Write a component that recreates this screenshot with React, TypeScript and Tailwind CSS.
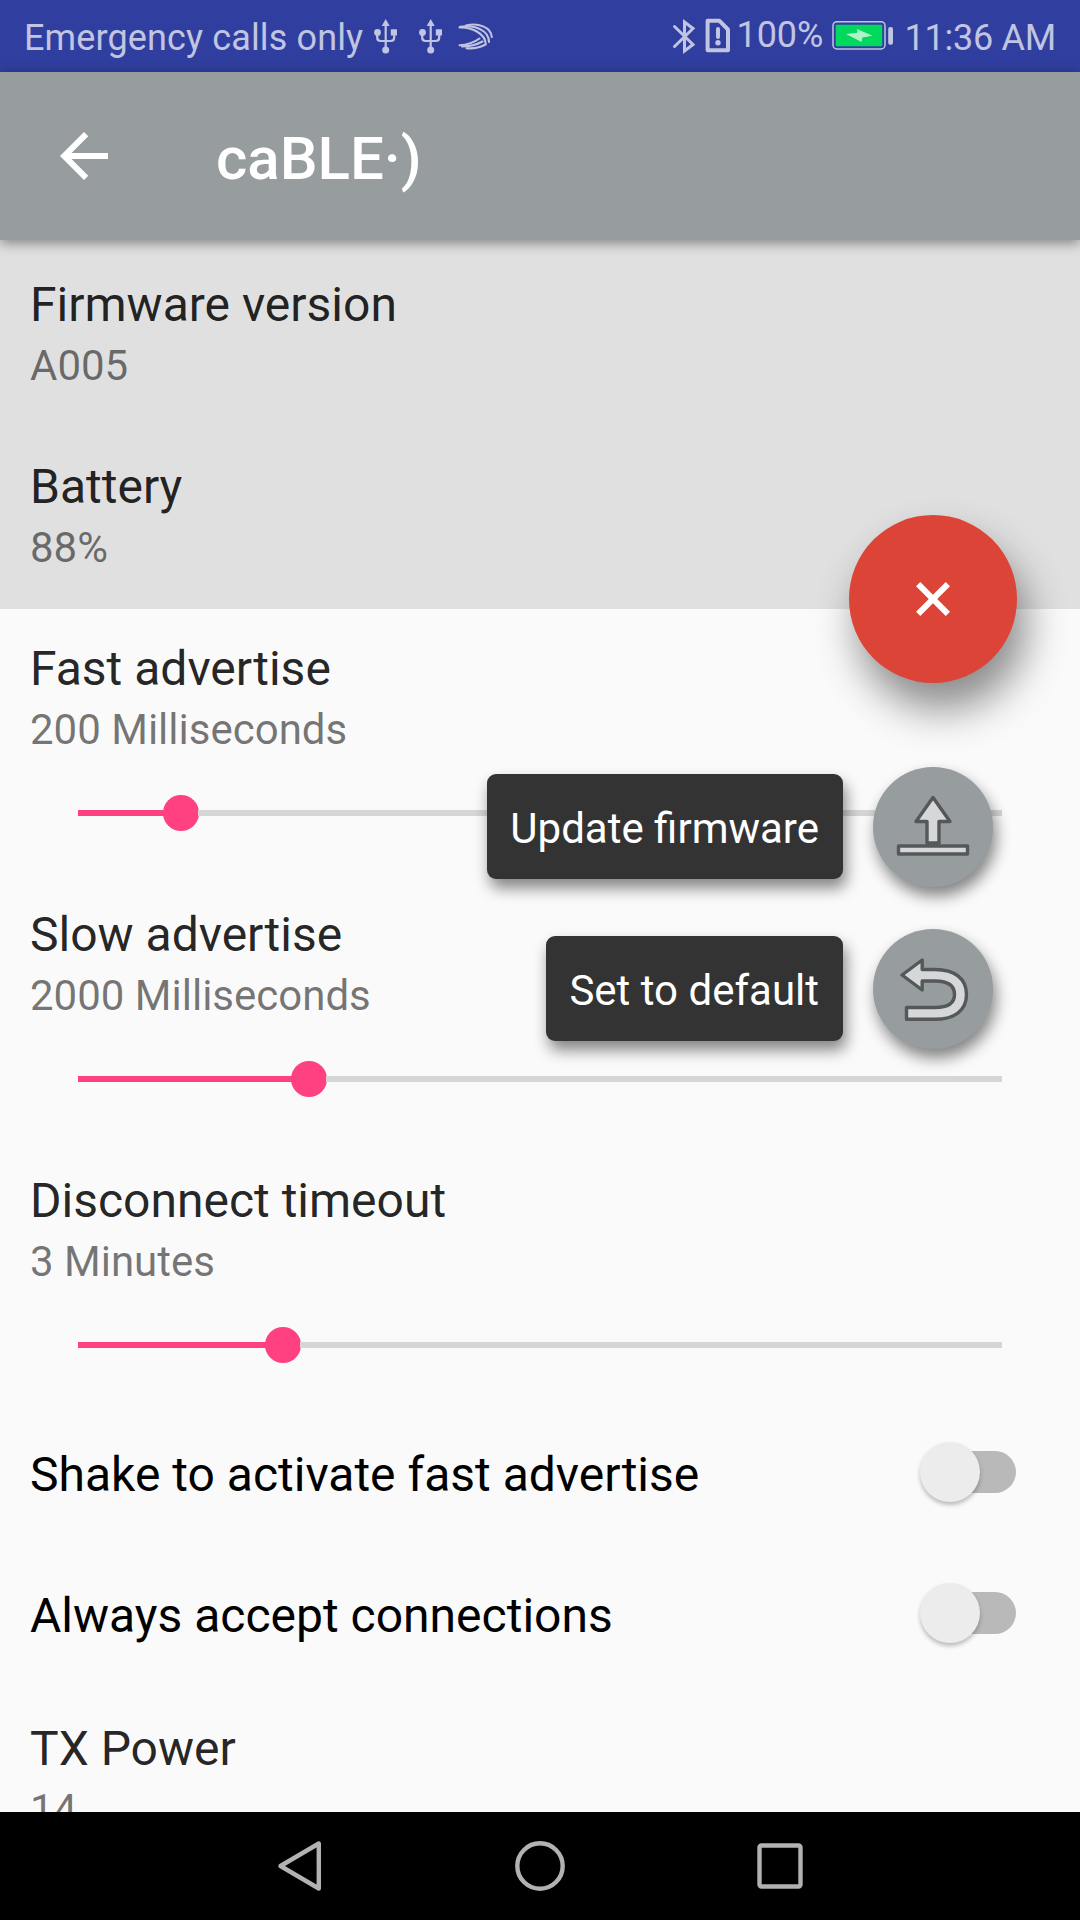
import { useState, type ReactNode } from "react";

type SliderSetting = { title: string; summary: string; fill: number };

const sliders: SliderSetting[] = [
  { title: "Fast advertise", summary: "200 Milliseconds", fill: 103 },
  { title: "Slow advertise", summary: "2000 Milliseconds", fill: 231 },
  { title: "Disconnect timeout", summary: "3 Minutes", fill: 205 },
];

export default function App() {
  const [shake, setShake] = useState(false);
  const [alwaysAccept, setAlwaysAccept] = useState(false);

  return (
    <div className="relative flex flex-col w-[1080px] h-[1920px] overflow-hidden bg-[#fafafa] font-['Roboto',sans-serif]">
      <StatusBar />
      <Toolbar title="caBLE·)" />
      <main className="flex-1 min-h-0 overflow-hidden">
        <section className="bg-[#e0e0e0] pt-[5px]">
          <Preference title="Firmware version" summary="A005" />
          <Preference title="Battery" summary="88%" />
        </section>
        {sliders.map((s) => (
          <SliderPreference key={s.title} {...s} />
        ))}
        <SwitchPreference title="Shake to activate fast advertise" checked={shake} onChange={setShake} />
        <SwitchPreference title="Always accept connections" checked={alwaysAccept} onChange={setAlwaysAccept} />
        <Preference title="TX Power" summary="14" />
      </main>
      <NavBar />
      <FabMenu />
    </div>
  );
}

function StatusBar() {
  return (
    <header className="flex h-[72px] shrink-0 items-start bg-[#303f9f] pl-6 pr-6 text-[36px] leading-[42px] text-[#c1c5e2]">
      <span className="mt-[17px] w-[344px] tracking-[0.13px] whitespace-nowrap">Emergency calls only</span>
      <UsbIcon />
      <UsbIcon />
      <svg className="mt-[23px] h-[28px] w-[36px]" viewBox="0 0 36 28" fill="none" stroke="currentColor" strokeLinecap="round" strokeWidth="2.1">
        <path d="M8 2.600C20 -.5 33 4 33.800 14" />
        <path d="M2 3.800C18 1.500 31 8 31 19" />
        <path d="M1.500 4.500C13 4 27.500 10 27.800 21.500" />
        <path d="M1.500 22.300C9 22 16 19.500 21.500 15.500" />
        <path d="M4 23.500C12 23.500 19 21.500 24.500 18.500" />
        <path d="M8.500 25.200C16 25.900 21.500 24.600 26.500 22" />
      </svg>

      <div className="ml-auto flex items-start">
        <svg className="mt-[18px] h-[37px] w-[24px]" viewBox="0 0 24 37" fill="none" stroke="currentColor" strokeWidth="3" strokeLinejoin="miter">
          <path strokeLinecap="round" d="M2.500 8.500L21 26.500L12.500 33V4L21 10.500L2.500 28.500" />
        </svg>
        <svg className="mt-[18px] ml-[9px] h-[36px] w-[26px]" viewBox="0 0 26 36">
          <path fill="none" stroke="currentColor" strokeWidth="4" strokeLinejoin="round" d="M2.600 2.800H14.500L23 11.500V32.200H2.600Z" />
          <rect x="11" y="9" width="4" height="12" rx="2" fill="currentColor" />
          <circle cx="13" cy="24.700" r="2.700" fill="currentColor" />
        </svg>
        <span className="mt-[14px] ml-[6px] w-[95px] tracking-[-0.1px]">100%</span>
        <svg className="mt-[20px] h-[31px] w-[62px]" viewBox="0 0 62 31">
          <rect x="1" y="1.700" width="52" height="27.300" rx="4" fill="none" stroke="currentColor" strokeWidth="1.500" />
          <rect x="3.700" y="4.700" width="46.500" height="21.600" rx="1" fill="#00d95b" />
          <path fill="#b0f2cb" d="M14 14L25.500 12.700L25 9L40.500 15.700L30.300 17.500L29.600 22Z" />
          <rect x="56.200" y="7" width="4.800" height="17.700" rx="2" fill="currentColor" />
        </svg>
        <span className="mt-[17px] ml-[11px] tracking-[-0.25px] whitespace-nowrap">11:36 AM</span>
      </div>
    </header>
  );
}

function UsbIcon() {
  return (
    <svg className="mt-[18px] mr-[9px] h-[37px] w-[36px]" viewBox="0 0 36 37">
      <path fill="none" stroke="currentColor" strokeWidth="2.200" d="M17.700 7V31M9.200 15V19.500Q9.200 23 12.700 23H22.700Q26.200 23 26.200 19.500V15" />
      <path fill="currentColor" d="M17.700 1L21.700 8H13.700Z" />
      <circle cx="9.500" cy="14.500" r="3.400" fill="currentColor" />
      <rect x="22.800" y="11.300" width="6.200" height="6.200" rx="0.500" fill="currentColor" />
      <circle cx="17.700" cy="32" r="3.500" fill="currentColor" />
    </svg>
  );
}

function Toolbar({ title }: { title: string }) {
  return (
    <div className="z-10 flex h-[168px] shrink-0 items-center bg-[#979c9f] pl-12 shadow-[0_3px_12px_rgba(0,0,0,0.42)]">
      <button aria-label="Back">
        <svg className="h-[72px] w-[72px]" viewBox="0 0 24 24" fill="white">
          <path d="M20 11H7.830l5.590-5.590L12 4l-8 8 8 8 1.410-1.410L7.830 13H20v-2z" />
        </svg>
      </button>
      <h1 className="mt-[5px] ml-24 text-[60px] leading-[70px] font-medium text-white">{title}</h1>
    </div>
  );
}

function PreferenceText({ title, summary }: { title: string; summary: string }) {
  return (
    <>
      <h2 className="text-[48px] leading-[56px] text-black/87">{title}</h2>
      <p className="mt-[5px] text-[42px] leading-[56px] text-black/54">{summary}</p>
    </>
  );
}

function Preference({ title, summary }: { title: string; summary: string }) {
  return (
    <div className="h-[182px] px-[30px] pt-8">
      <PreferenceText title={title} summary={summary} />
    </div>
  );
}

function SliderPreference({ title, summary, fill }: SliderSetting) {
  return (
    <div className="h-[266px] px-[30px] pt-8">
      <PreferenceText title={title} summary={summary} />
      <div className="mt-[37px] ml-12 flex h-9 w-[924px] items-center">
        <div className="h-[6px] bg-[#ff4081]" style={{ width: fill - 17 }} />
        <div className="-mx-px h-9 w-9 shrink-0 rounded-full bg-[#ff4081]" />
        <div className="h-[6px] flex-1 bg-[#d6d6d6]" />
      </div>
    </div>
  );
}

type SwitchProps = { title: string; checked: boolean; onChange: (value: boolean) => void };

function SwitchPreference({ title, checked, onChange }: SwitchProps) {
  return (
    <div className="flex h-[141px] items-start justify-between pt-[35px] pr-16 pl-[30px]">
      <span className="mt-[5px] text-[48px] leading-[56px] text-black">{title}</span>
      <button
        role="switch"
        aria-checked={checked}
        aria-label={title}
        onClick={() => onChange(!checked)}
        className="relative mt-[7px] flex h-[60px] w-24 -translate-y-[7px] items-center justify-end"
      >
        <span className="h-[42px] w-[78px] rounded-full bg-[#b9b9b9]" />
        <span
          className={`absolute top-0 h-[60px] w-[60px] rounded-full shadow-[0_3px_4px_rgba(0,0,0,0.25)] ${
            checked ? "right-0 bg-[#ff4081]" : "left-0 bg-[#ececec]"
          }`}
        />
      </button>
    </div>
  );
}

function FabMenu() {
  return (
    <div className="absolute top-[515px] right-[63px] z-20 flex flex-col items-end">
      <button
        aria-label="Close menu"
        className="flex h-[168px] w-[168px] items-center justify-center rounded-full bg-[#db4437] shadow-[9px_26px_42px_rgba(0,0,0,0.45)]"
      >
        <svg className="h-[72px] w-[72px] rotate-45" viewBox="0 0 24 24" fill="white">
          <path d="M19 13h-6v6h-2v-6H5v-2h6V5h2v6h6v2z" />
        </svg>
      </button>
      <div className="mt-[84px] mr-6 flex flex-col items-end gap-[42px]">
        <FabAction label="Update firmware">
          <path d="M60 30.500L43 54.500H54V76H66V54.500H77Z" />
          <rect x="25.500" y="79" width="69" height="8" />
        </FabAction>
        <FabAction label="Set to default">
          <path d="M29 46L49.200 31V40.500H62C82 40.500 93.500 50 93.500 65.500C93.500 81 82 90.300 62 90.300H33.500V78.500H62C75 78.500 81.500 74 81.500 65.500C81.500 57 75 52 62 52H49.200V61Z" />
        </FabAction>
      </div>
    </div>
  );
}

function FabAction({ label, children }: { label: string; children: ReactNode }) {
  return (
    <div className="flex items-center gap-[30px]">
      <span className="-mt-[1px] flex h-[105px] items-center rounded-[9px] bg-[#333333] pr-6 pl-[23.5px] pt-1 text-[42px] leading-[49px] whitespace-nowrap text-white shadow-[3px_9px_15px_rgba(0,0,0,0.48)]">
        {label}
      </span>
      <button aria-label={label} className="h-[120px] w-[120px] rounded-full bg-[#979c9f] shadow-[3px_9px_15px_rgba(0,0,0,0.48)]">
        <svg className="h-[120px] w-[120px]" viewBox="0 0 120 120" fill="#d5d7d9" stroke="#55585a" strokeWidth="3.4" strokeLinejoin="round">
          {children}
        </svg>
      </button>
    </div>
  );
}

function NavBar() {
  return (
    <nav className="z-10 flex h-[108px] shrink-0 items-center justify-center gap-[188px] bg-black text-[#b2b2b2]">
      <svg className="h-[52px] w-[52px]" viewBox="0 0 52 52" fill="none" stroke="currentColor" strokeWidth="4.400" strokeLinejoin="round">
        <path d="M44.800 3.500V48.500L6.500 26Z" />
      </svg>
      <svg className="h-[52px] w-[52px]" viewBox="0 0 52 52" fill="none" stroke="currentColor" strokeWidth="4.400">
        <circle cx="26" cy="26" r="22.700" />
      </svg>
      <svg className="h-[52px] w-[52px]" viewBox="0 0 52 52" fill="none" stroke="currentColor" strokeWidth="4.400">
        <rect x="5.500" y="5.500" width="41" height="41" rx="2" />
      </svg>
    </nav>
  );
}
